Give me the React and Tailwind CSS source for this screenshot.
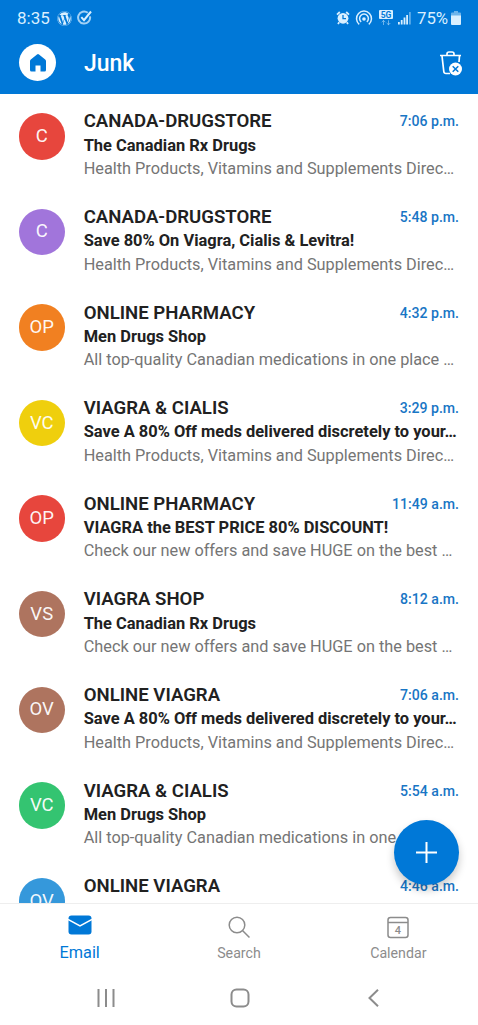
import { FaWordpress } from "react-icons/fa";

const mails = [
  { id: "C", color: "bg-[#e7463d]", from: "CANADA-DRUGSTORE", subject: "The Canadian Rx Drugs", preview: "Health Products, Vitamins and Supplements Direc…", time: "7:06 p.m." },
  { id: "C", color: "bg-[#a175db]", from: "CANADA-DRUGSTORE", subject: "Save 80% On Viagra, Cialis & Levitra!", preview: "Health Products, Vitamins and Supplements Direc…", time: "5:48 p.m." },
  { id: "OP", color: "bg-[#f18021]", from: "ONLINE PHARMACY", subject: "Men Drugs Shop", preview: "All top-quality Canadian medications in one place …", time: "4:32 p.m." },
  { id: "VC", color: "bg-[#efcf0d]", from: "VIAGRA & CIALIS", subject: "Save A 80% Off meds delivered discretely to your…", preview: "Health Products, Vitamins and Supplements Direc…", time: "3:29 p.m." },
  { id: "OP", color: "bg-[#e7463d]", from: "ONLINE PHARMACY", subject: "VIAGRA the BEST PRICE 80% DISCOUNT!", preview: "Check our new offers and save HUGE on the best …", time: "11:49 a.m." },
  { id: "VS", color: "bg-[#ae745f]", from: "VIAGRA SHOP", subject: "The Canadian Rx Drugs", preview: "Check our new offers and save HUGE on the best …", time: "8:12 a.m." },
  { id: "OV", color: "bg-[#ae745f]", from: "ONLINE VIAGRA", subject: "Save A 80% Off meds delivered discretely to your…", preview: "Health Products, Vitamins and Supplements Direc…", time: "7:06 a.m." },
  { id: "VC", color: "bg-[#34c471]", from: "VIAGRA & CIALIS", subject: "Men Drugs Shop", preview: "All top-quality Canadian medications in one place …", time: "5:54 a.m." },
  { id: "OV", color: "bg-[#3598db]", from: "ONLINE VIAGRA", subject: "Save A 80% Off meds delivered discretely to your…", time: "4:46 a.m." },
];

function StatusBar() {
  return (
    <div className="flex h-[36px] items-center justify-between pl-[17px] pr-[17px] text-[#d9efff]">
      <div className="flex items-center">
        <span className="w-[40px] text-[17px] leading-[20px]">8:35</span>
        <FaWordpress className="h-[15px] w-[15px]" />
        <svg className="ml-[5px] h-[16px] w-[16px]" viewBox="0 0 16 16" fill="none" stroke="currentColor">
          <path d="M10.8 2.8A6 6 0 1 0 13 6.4" strokeWidth="2" opacity=".75" />
          <path d="M4.3 7.200 7 10.200 14 1.500" strokeWidth="2" />
        </svg>
      </div>
      <div className="flex items-center">
        <svg className="h-[14px] w-[14px]" viewBox="0 0 14 14">
          <path d="M1 3.600 3.800 1M13 3.600 10.200 1M3.200 11.300 2 13M10.800 11.300 12 13" stroke="currentColor" strokeWidth="1.800" />
          <circle cx="7" cy="7.300" r="5.400" fill="currentColor" />
          <path d="M7 4v3.600h3" fill="none" stroke="#0078d7" strokeWidth="1.300" />
        </svg>
        <svg className="ml-[5px] h-[16px] w-[18px]" viewBox="0 0 18 16" fill="none" stroke="currentColor" strokeWidth="1.500">
          <path d="M4.200 14.300A7.500 7.500 0 1 1 13.800 14.300" />
          <path d="M6.200 11.800A4.400 4.400 0 1 1 11.800 11.800" />
          <circle cx="9" cy="9" r="1.800" fill="currentColor" stroke="none" />
        </svg>
        <svg className="ml-[6px] h-[16px] w-[14px]" viewBox="0 0 14 16">
          <rect width="14" height="9" rx="1" fill="currentColor" />
          <text x="7" y="7.600" textAnchor="middle" fontFamily="Roboto, sans-serif" fontSize="8.500" fontWeight="700" fill="#0078d7">5G</text>
          <path d="M4.500 15v-4.500M2.700 12.200l1.800-1.800 1.800 1.800M9.500 10.300v4.500M7.700 13l1.800 1.800L11.300 13" fill="none" stroke="currentColor" opacity=".5" />
        </svg>
        <svg className="ml-[5px] h-[14px] w-[13px]" viewBox="0 0 13 14" fill="currentColor">
          <path d="M0 11h1.800v2.500H0zM2.800 9h1.800v4.500H2.800zM5.600 6.500h1.800v7H5.600zM8.200 4H10v9.500H8.200z" />
          <path d="M11 1h1.800v12.500H11z" opacity=".45" />
        </svg>
        <span className="ml-[6px] w-[34px] whitespace-nowrap text-[16.8px] leading-[20px]">75%</span>
        <svg className="h-[14px] w-[10px]" viewBox="0 0 10 14" fill="currentColor">
          <path d="M3 0h4v1.500h2a1 1 0 0 1 1 1V5H0V2.500a1 1 0 0 1 1-1h2z" opacity=".5" />
          <path d="M0 4.500h10V13a1 1 0 0 1-1 1H1a1 1 0 0 1-1-1z" />
        </svg>
      </div>
    </div>
  );
}

function MailRow({ mail }) {
  return (
    <li className="flex h-[95.6px] shrink-0 pl-[18.5px] pr-[19px]">
      <div className={`mt-[19px] flex h-[46.5px] w-[46.5px] shrink-0 items-center justify-center rounded-full pt-[1px] text-[18.5px] text-white/95 ${mail.color}`}>
        {mail.id}
      </div>
      <div className="ml-[18.7px] min-w-0 flex-1 whitespace-nowrap pt-[16.4px] leading-[23.3px]">
        <div className="flex justify-between">
          <span className="text-[18.6px] font-semibold text-[#212121]">{mail.from}</span>
          <span className="text-[14.1px] font-medium text-[#1976c5]">{mail.time}</span>
        </div>
        <div className="text-[16.45px] font-bold text-[#212121]">{mail.subject}</div>
        {mail.preview && <div className="text-[16.3px] text-[#757575]">{mail.preview}</div>}
      </div>
    </li>
  );
}

export default function App() {
  return (
    <div className="relative flex h-[1025px] w-[478px] flex-col overflow-hidden bg-white font-['Roboto',sans-serif]">
      <header className="h-[94px] shrink-0 bg-[#0078d7]">
        <StatusBar />
        <div className="flex h-[53px] items-center pl-[19px] pr-[15px]">
          <div className="flex h-[37px] w-[37px] items-center justify-center rounded-full bg-white">
            <svg className="h-[20px] w-[18px]" viewBox="0 0 18 20">
              <path d="M1 8.200Q1 7.200 1.800 6.500L8 1.400Q9 .7 10 1.400L16.200 6.500Q17 7.200 17 8.200V17Q17 18.500 15.500 18.500H11.500V12.500H6.500V18.500H2.500Q1 18.500 1 17Z" fill="#0078d7" />
            </svg>
          </div>
          <h1 className="ml-[28px] flex-1 pt-[3px] text-[23px] font-medium text-white">Junk</h1>
          <svg className="h-[26px] w-[24px]" viewBox="0 0 24 26" fill="none" stroke="#fff" strokeWidth="1.700">
            <path d="M1 5.500H22M8 5V4Q8 2 10 2H13Q15 2 15 4V5M3 6 4.800 21.500Q5 23.500 7 23.500H11M20.500 6 20 12" />
            <circle cx="16.500" cy="19" r="6.500" fill="#fff" stroke="none" />
            <path d="m13.700 16.200 5.600 5.600m0-5.600-5.600 5.600" stroke="#0078d7" strokeWidth="1.500" />
          </svg>
        </div>
      </header>
      <ul className="flex h-[809px] shrink-0 flex-col overflow-hidden">
        {mails.map((mail) => <MailRow key={mail.time} mail={mail} />)}
      </ul>
      <nav className="grid h-[66px] shrink-0 grid-cols-3 border-t border-[#eeeeee] text-[14.2px] text-[#8c8c8c]">
        <div className="flex flex-col items-center text-[#0078d7]">
          <svg className="mt-[11px] h-[20px] w-[24px]" viewBox="0 0 24 20">
            <rect x=".5" y=".5" width="23" height="19" rx="3" fill="currentColor" />
            <path d="M0 4.500 12 11 24 4.500" fill="none" stroke="#fff" strokeWidth="1.500" />
          </svg>
          <span className="mt-[8px] text-[16.3px] leading-[20px]">Email</span>
        </div>
        <div className="flex flex-col items-center">
          <svg className="mt-[11px] h-[24px] w-[24px]" viewBox="0 0 24 24" fill="none" stroke="currentColor" strokeWidth="1.500">
            <circle cx="10" cy="10" r="7.800" />
            <path d="m15.500 15.500 7 7" />
          </svg>
          <span className="mt-[4px] leading-[20px]">Search</span>
        </div>
        <div className="flex flex-col items-center">
          <svg className="mt-[11px] h-[24px] w-[24px]" viewBox="0 0 24 24" fill="none" stroke="currentColor" strokeWidth="1.500">
            <rect x="2" y="2.500" width="20" height="20" rx="2.500" />
            <path d="M2 7.500H22" />
            <text x="12" y="19" textAnchor="middle" fontFamily="Roboto, sans-serif" fontSize="11" fontWeight="500" fill="currentColor" stroke="none">4</text>
          </svg>
          <span className="mt-[4px] leading-[20px]">Calendar</span>
        </div>
      </nav>
      <div className="flex h-[56px] shrink-0 items-center pt-[2px] text-[#8c8c8c]">
        <svg className="ml-[97px] h-[18px] w-[18px]" viewBox="0 0 18 18" stroke="currentColor" strokeWidth="2">
          <path d="M1.500 0v18M9 0v18M16.500 0v18" />
        </svg>
        <svg className="ml-[115px] h-[20px] w-[20px]" viewBox="0 0 20 20" fill="none" stroke="currentColor" strokeWidth="2">
          <rect x="1.500" y="1.500" width="17" height="17" rx="5" />
        </svg>
        <svg className="ml-[118px] h-[18px] w-[11px]" viewBox="0 0 11 18" fill="none" stroke="currentColor" strokeWidth="2">
          <path d="m10 .8-8.500 8.200L10 17.200" />
        </svg>
      </div>
      <button aria-label="Compose" className="absolute left-[394px] top-[820px] flex h-[65px] w-[65px] items-center justify-center rounded-full bg-[#0078d7] shadow-[0_5px_9px_rgba(0,0,0,0.22)]">
        <svg className="h-[21px] w-[21px]" viewBox="0 0 21 21" stroke="#fff" strokeWidth="2">
          <path d="M10.500 0v21M0 10.500h21" />
        </svg>
      </button>
    </div>
  );
}
